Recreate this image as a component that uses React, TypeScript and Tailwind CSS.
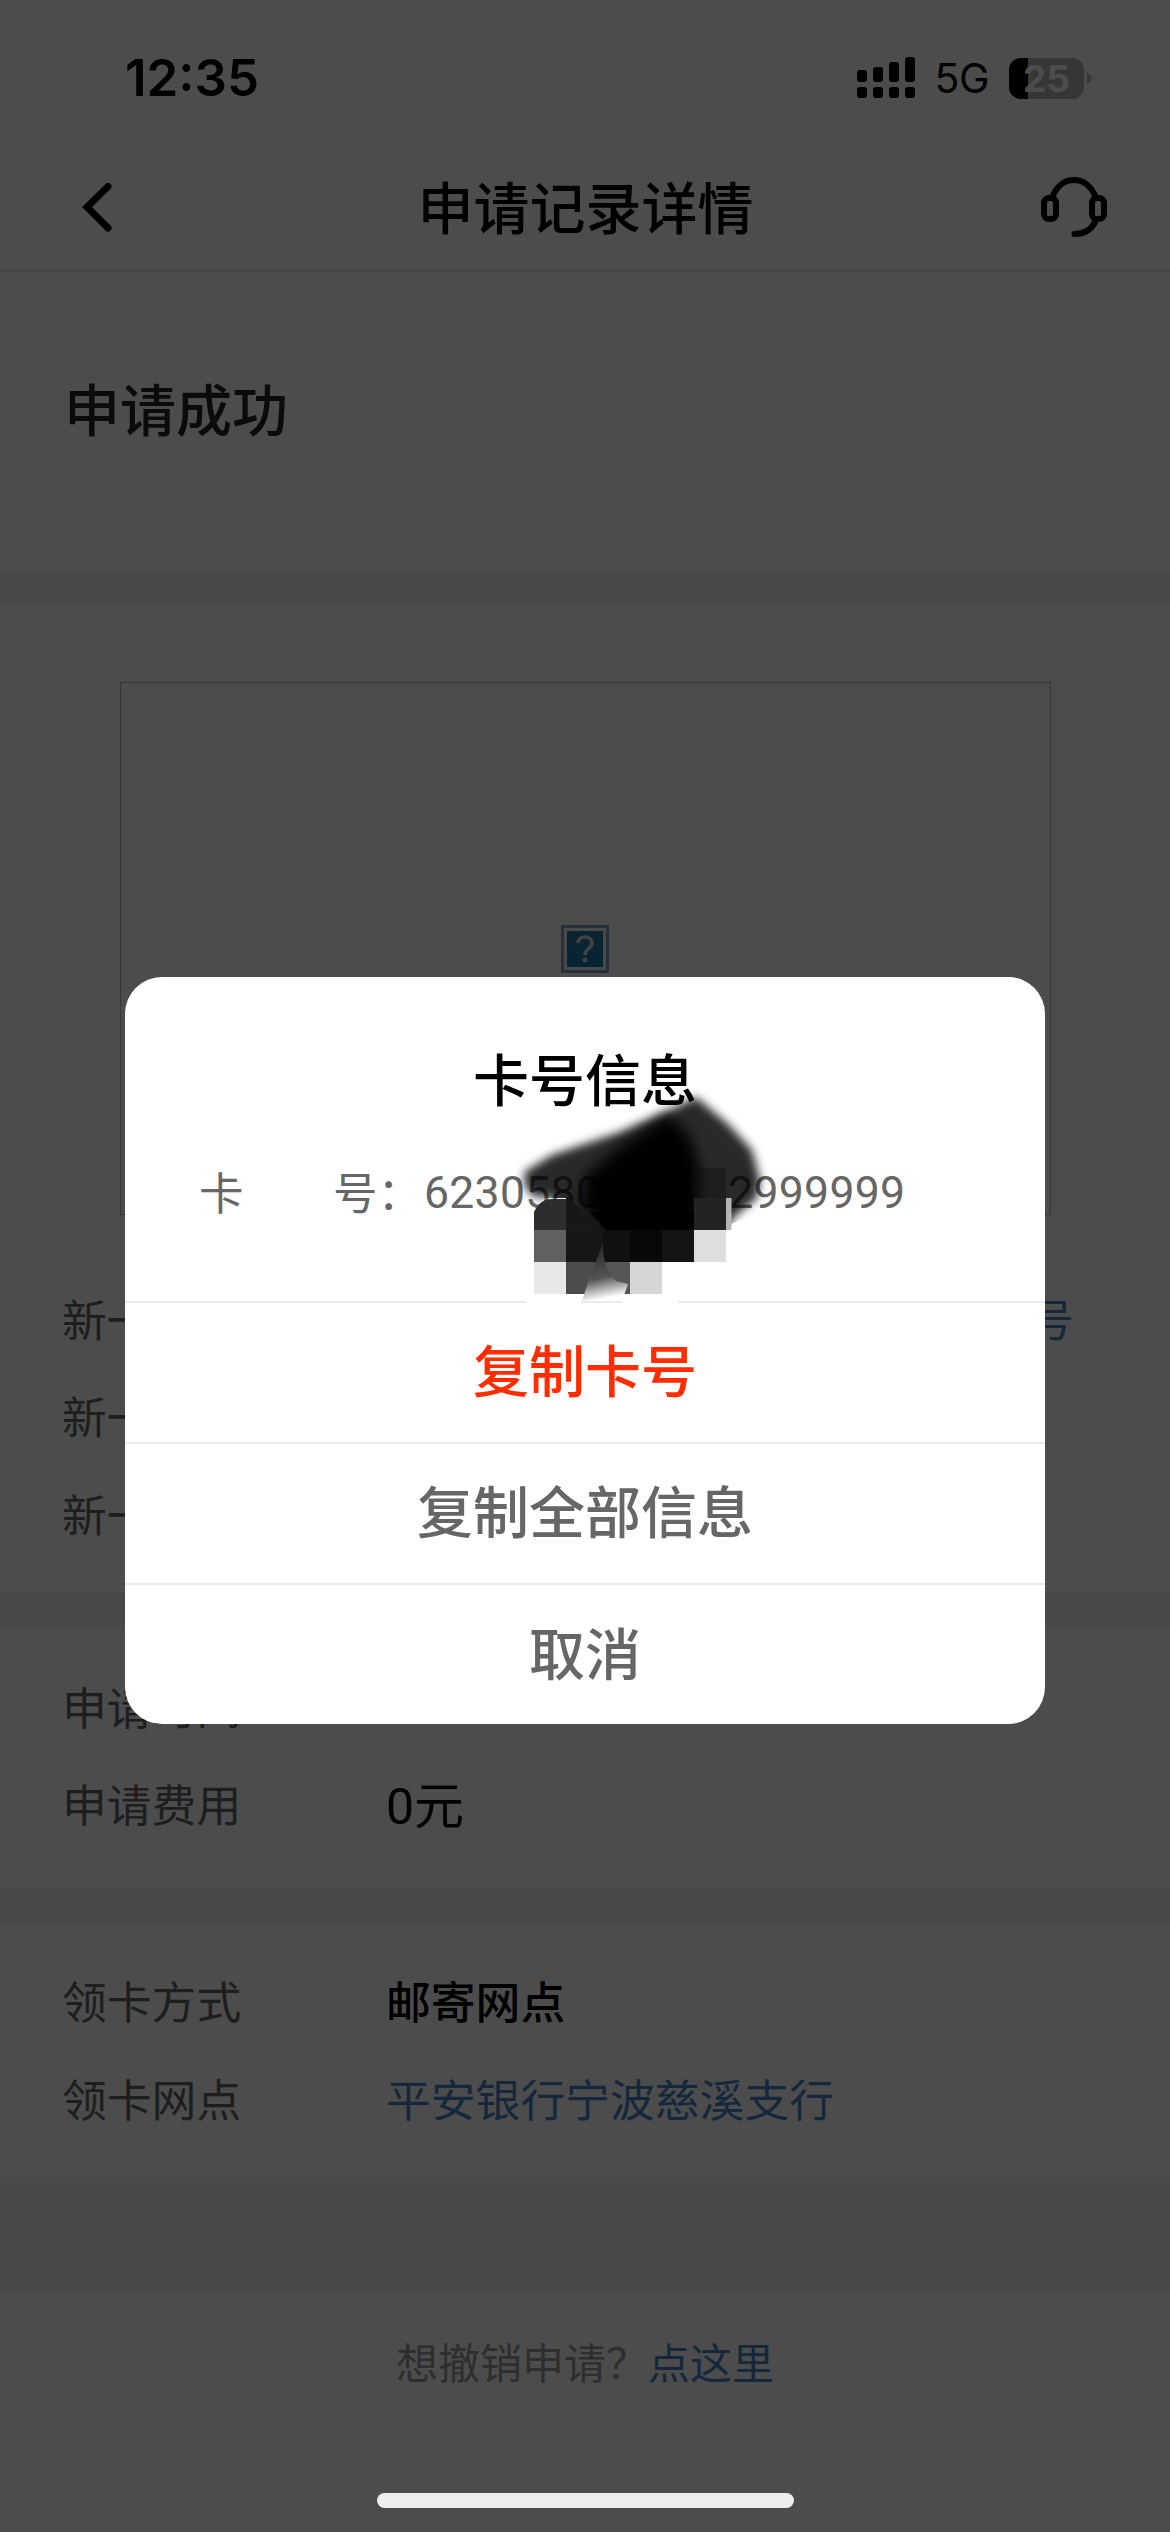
import React from "react";

function SignalIcon() {
  const tops = [70, 67, 62, 57];
  return (
    <svg className="h-[42px] w-[58px]" viewBox="0 57 58 42">
      {tops.map((y, i) => (
        <g key={y}>
          <rect x={i * 16} y={y} width="10" height={82 - y} rx="3" />
          <rect x={i * 16} y="87" width="10" height="11" rx="3" />
        </g>
      ))}
    </svg>
  );
}

function Battery() {
  return (
    <div className="flex items-center">
      <div className="relative flex h-[41px] w-[75px] items-center justify-center rounded-[12px] bg-[#b6b6b6]">
        <div className="absolute inset-y-0 left-0 w-[19px] rounded-l-[12px] bg-black" />
        <span className="relative font-[Inter] text-[37px] font-bold leading-[41px] text-white">25</span>
      </div>
      <svg className="ml-[3px] h-[11px] w-[5px]" viewBox="0 0 5 11">
        <path d="M0 0C3 1 4.5 3 4.5 5.500S3 10 0 11Z" fill="#b6b6b6" />
      </svg>
    </div>
  );
}

function HeadsetIcon() {
  return (
    <svg className="h-[62px] w-[68px]" viewBox="1040 176 68 62" fill="none" stroke="#000" strokeWidth="6" strokeLinecap="round">
      <rect x="1044" y="198" width="12" height="21" rx="5" />
      <rect x="1092" y="198" width="12" height="21" rx="5" />
      <path d="M1052.500 197C1056 187 1064 180 1074 180S1092 187 1095.500 197" />
      <path d="M1095.500 221C1092 229 1085 234 1074.500 234" />
    </svg>
  );
}

function MissingImage() {
  return (
    <svg className="mt-[241px] h-[50px] w-[50px]" viewBox="0 0 50 50">
      <defs>
        <linearGradient id="tile" x1="0" y1="0" x2="0" y2="1">
          <stop offset="0" stopColor="#2c78a8" />
          <stop offset="1" stopColor="#1478ac" />
        </linearGradient>
      </defs>
      <rect x="2.500" y="2.500" width="45" height="45" fill="#f4f4f4" stroke="#8a9dbd" strokeWidth="3" />
      <rect x="7" y="7" width="36" height="36" fill="url(#tile)" />
      <path d="M18 19C18 11 32 11 32 19C32 25 25 24 25 31" fill="none" stroke="#ddd" strokeWidth="3.500" />
      <circle cx="25" cy="36" r="2.500" fill="#ddd" />
    </svg>
  );
}

function Row({ label, children }: { label: string; children?: React.ReactNode }) {
  return (
    <div className="flex h-[97.5px] items-center pl-[62px] pr-[96px]">
      <span className="w-[324px] text-[#666]">{label}</span>
      {children}
    </div>
  );
}

const Band = ({ className }: { className: string }) => <div className={`bg-[#f3f3f3] ${className}`} />;

function Redaction() {
  return (
    <svg className="absolute left-[375px] top-[103px] h-[240px] w-[300px]" viewBox="500 1080 300 240">
      <defs>
        <filter id="soft" x="-20%" y="-20%" width="140%" height="140%">
          <feGaussianBlur stdDeviation="5" />
        </filter>
        <filter id="core" x="-20%" y="-20%" width="140%" height="140%">
          <feGaussianBlur stdDeviation="7" />
        </filter>
        <clipPath id="smear">
          <path d="M500 1080H800V1195L731 1224V1230H566V1198H545L534 1210H500Z" />
        </clipPath>
      </defs>
      <rect x="526" y="1299" width="55" height="8" fill="#fff" />
      <rect x="622" y="1299" width="56" height="8" fill="#fff" />
      <g clipPath="url(#smear)">
        <path
          d="M524 1172L552 1155L620 1132L672 1109L696 1097L728 1124L752 1150L760 1180L757 1198L733 1218L722 1240H560L552 1197L534 1197L525 1187Z"
          fill="#000"
          fillOpacity="0.84"
          filter="url(#soft)"
        />
        <path d="M585 1176L620 1147L668 1115L690 1136L700 1170L698 1240H610L582 1205Z" fill="#000" filter="url(#core)" />
      </g>
      <path d="M534 1230V1212Q540 1199 552 1199H566V1230Z" fill="#2d2d2d" />
      <path d="M566 1196L580 1208L600 1230H566Z" fill="#171717" />
      <path d="M590 1212H694V1231H608Z" fill="#000" />
      <rect x="694" y="1168" width="32" height="30" fill="#101010" fillOpacity="0.4" />
      <rect x="694" y="1198" width="32" height="32" fill="#232323" />
      <rect x="726" y="1198" width="5.500" height="32" fill="#b5b5b5" />
      <rect x="534" y="1230" width="32" height="32" fill="#606060" />
      <rect x="566" y="1230" width="37" height="32" fill="#161616" />
      <rect x="603" y="1230" width="27" height="32" fill="#101010" />
      <rect x="630" y="1230" width="32" height="32" fill="#080808" />
      <rect x="662" y="1230" width="32" height="32" fill="#141414" />
      <rect x="694" y="1230" width="32" height="32" fill="#dedede" />
      <rect x="534" y="1262" width="32" height="32" fill="#e8e8e8" />
      <rect x="566" y="1262" width="32" height="32" fill="#4c4c4c" />
      <rect x="598" y="1262" width="32" height="32" fill="#565656" />
      <rect x="630" y="1262" width="32" height="32" fill="#d6d6d6" />
      <linearGradient id="tail" x1="0.400" y1="0" x2="0.550" y2="1">
        <stop offset="0" stopColor="#222" />
        <stop offset="0.600" stopColor="#555" />
        <stop offset="0.950" stopColor="#fff" />
      </linearGradient>
      <path d="M603 1242Q602 1268 616 1281L628 1284L622 1301H582L590 1276L598 1256Z" fill="url(#tail)" />
    </svg>
  );
}

function CardDialog() {
  return (
    <div className="absolute left-[125px] top-[977px] flex h-[747px] w-[920px] flex-col overflow-hidden rounded-[37px] bg-white text-center text-[56px] font-medium">
      <div className="flex h-[326px] flex-col border-b-2 border-[#ebebeb] pt-[60px]">
        <h2 className="h-[80px] leading-[80px] text-black">卡号信息</h2>
        <div className="mt-[34px] flex h-[80px] items-center pl-[74px] text-[44.500px] font-normal text-[#666]">
          <span className="w-[134px] text-left">卡</span>
          <span className="w-[91px] whitespace-nowrap text-left">号：</span>
          <span className="pt-[5px] font-[Roboto] tracking-[0.300px]">6230580</span>
          <span className="w-[127px]" />
          <span className="pt-[5px] font-[Roboto] tracking-[0.300px]">2999999</span>
        </div>
      </div>
      <button className="h-[141px] border-b-2 border-[#ebebeb] pb-[9px] text-[#ff2d00]">复制卡号</button>
      <button className="h-[141px] border-b-2 border-[#ebebeb] pb-[9px] text-[#666]">复制全部信息</button>
      <button className="h-[139px] pb-[8px] text-[#666]">取消</button>
      <Redaction />
    </div>
  );
}

export default function App() {
  return (
    <div className="relative h-[2532px] w-[1170px] overflow-hidden bg-white font-['Noto_Sans_CJK_SC',sans-serif] text-[44.800px]">
      <header className="h-[272px] border-b-2 border-[#e0e0e0]">
        <div className="flex h-[156px] items-center justify-between pl-[125px] pr-[78px] font-[Inter]">
          <span className="text-[51px] font-semibold leading-[60px]">12:35</span>
          <div className="flex items-center">
            <SignalIcon />
            <span className="ml-[19px] mr-[20px] text-[41px] leading-[50px] tracking-[-0.500px]">5G</span>
            <Battery />
          </div>
        </div>
        <div className="flex h-[102px] items-center justify-between pl-[80px] pr-[62px]">
          <svg className="h-[52px] w-[34px]" viewBox="0 0 34 52" fill="none" stroke="#000" strokeWidth="7" strokeLinecap="round">
            <path d="M28 5.500L7 26L28 47" />
          </svg>
          <h1 className="pb-[4px] pl-[17px] text-[56px] font-medium leading-[80px]">申请记录详情</h1>
          <HeadsetIcon />
        </div>
      </header>
      <section className="h-[299px] pl-[64px] pt-[95px] text-[56px] font-medium leading-[80px] text-[#252525]">申请成功</section>
      <Band className="h-[35px]" />
      <section className="h-[986px] pt-[76px]">
        <div className="mx-auto mb-[53.5px] flex h-[533px] w-[931px] justify-center border border-[#b4b4b4]">
          <MissingImage />
        </div>
        <Row label="新一">
          <span className="ml-auto text-[#4686c6]">号</span>
        </Row>
        <Row label="新一" />
        <Row label="新一" />
      </section>
      <Band className="h-[36px]" />
      <section className="h-[259px] pt-[28.5px]">
        <Row label="申请时间" />
        <Row label="申请费用">
          <span className="pt-[4px] text-[50px] text-black">
            <span className="font-[Roboto]">0</span>元
          </span>
        </Row>
      </section>
      <Band className="h-[37px]" />
      <section className="h-[253px] pt-[27px]">
        <Row label="领卡方式">
          <span className="font-medium text-black">邮寄网点</span>
        </Row>
        <Row label="领卡网点">
          <span className="text-[#4686c6]">平安银行宁波慈溪支行</span>
        </Row>
      </section>
      <Band className="h-[117px]" />
      <footer className="flex pl-[396px] pt-[37px] text-[42px] leading-[60px]">
        <span className="w-[252px] whitespace-nowrap text-[#999]">想撤销申请？</span>
        <span className="text-[#4686c6]">点这里</span>
      </footer>
      <div className="absolute inset-0 bg-black/70" />
      <CardDialog />
      <div className="absolute left-[377px] top-[2493px] h-[15px] w-[417px] rounded-full bg-[#eee]" />
    </div>
  );
}
